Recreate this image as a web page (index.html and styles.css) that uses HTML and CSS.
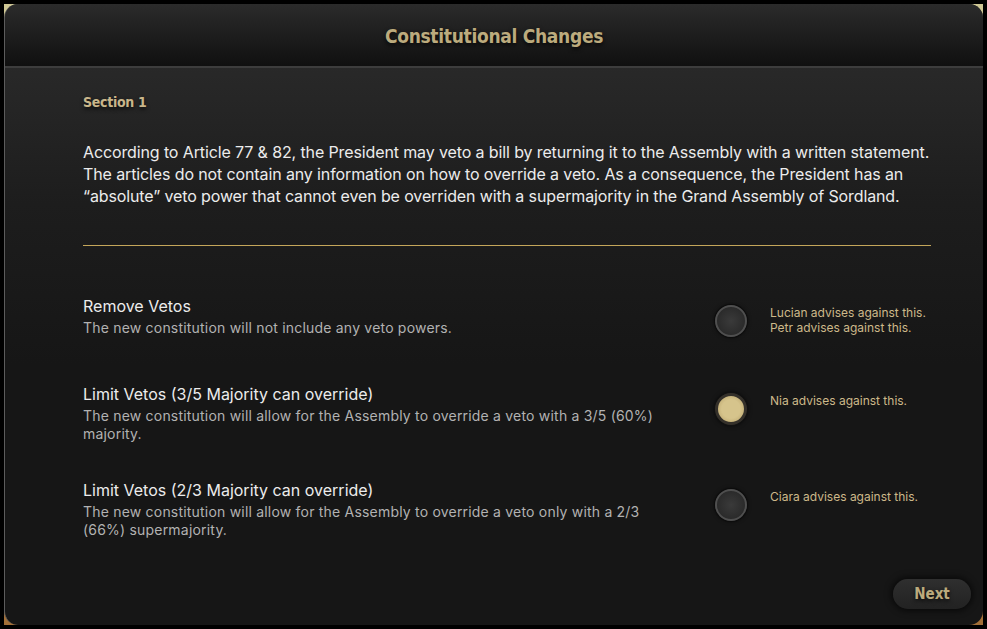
FILE: index.html
```html
<!DOCTYPE html>
<html lang="en">
<head>
    <meta charset="UTF-8">
    <meta name="viewport" content="width=device-width, initial-scale=1.0">
    <title>Constitutional Changes</title>
    <link rel="stylesheet" href="styles.css">
</head>
<body>

    <div class="frame">
        <div class="window">

            <!-- Title Bar -->
            <div class="title-bar">
                <h1>Constitutional Changes</h1>
            </div>

            <div class="content">
                <h2 class="section-label">Section 1</h2>
                <p class="summary">According to Article 77 &amp; 82, the President may veto a bill by returning it to the Assembly with a written statement. The articles do not contain any information on how to override a veto. As a consequence, the President has an “absolute” veto power that cannot even be overriden with a supermajority in the Grand Assembly of Sordland.</p>

                <div class="divider"></div>

                <!-- Options -->
                <div class="options">
                    <div class="option">
                        <div class="option-text">
                            <h3>Remove Vetos</h3>
                            <p>The new constitution will not include any veto powers.</p>
                        </div>
                        <div class="radio-cell"><span class="radio"></span></div>
                        <div class="advice">
                            <span>Lucian advises against this.</span>
                            <span>Petr advises against this.</span>
                        </div>
                    </div>

                    <div class="option">
                        <div class="option-text">
                            <h3>Limit Vetos (3/5 Majority can override)</h3>
                            <p>The new constitution will allow for the Assembly to override a veto with a 3/5 (60%) majority.</p>
                        </div>
                        <div class="radio-cell"><span class="radio selected"></span></div>
                        <div class="advice">
                            <span>Nia advises against this.</span>
                        </div>
                    </div>

                    <div class="option">
                        <div class="option-text">
                            <h3>Limit Vetos (2/3 Majority can override)</h3>
                            <p>The new constitution will allow for the Assembly to override a veto only with a 2/3 (66%) supermajority.</p>
                        </div>
                        <div class="radio-cell"><span class="radio"></span></div>
                        <div class="advice">
                            <span>Ciara advises against this.</span>
                        </div>
                    </div>
                </div>

                <div class="footer">
                    <button class="next-btn">Next</button>
                </div>
            </div>
        </div>
    </div>

</body>
</html>
```

FILE: styles.css
```css
/* General Styling */
html, body {
    margin: 0;
    height: 100%;
}

body {
    background-color: #000;
    font-family: Inter, "Noto Sans", sans-serif;
    padding: 4px;
    box-sizing: border-box;
}

.frame {
    height: 100%;
    background: linear-gradient(#cfc795, #d6c27a 30%, #b58f55 70%, #a36f37);
}

.window {
    height: 100%;
    display: flex;
    flex-direction: column;
    border-radius: 14px;
    overflow: hidden;
    background: linear-gradient(#2e2e2e 0px, #1d1d1d 200px, #161616 360px, #161616);
    border-left: 1px solid #5c5c5c;
    box-sizing: border-box;
}

/* Title Bar */
.title-bar {
    height: 62px;
    flex-shrink: 0;
    display: flex;
    align-items: center;
    justify-content: center;
    background: linear-gradient(#2b2b2b, #101010);
    border-bottom: 2px solid #3d3d3d;
}

.title-bar h1,
.section-label,
.next-btn {
    font-family: "DejaVu Sans", sans-serif;
    font-stretch: condensed;
    font-weight: bold;
    color: #bcab7d;
    text-shadow: 0 2px 4px rgba(0,0,0,0.8);
}

.title-bar h1 {
    margin: 2px 0 0;
    font-size: 19px;
    letter-spacing: -0.3px;
}

/* Content */
.content {
    flex: 1;
    display: flex;
    flex-direction: column;
    padding: 26px 52px 16px 78px;
}

.section-label {
    margin: 0;
    font-size: 14px;
    letter-spacing: -0.3px;
    color: #c9b68a;
}

.summary {
    margin: 31px 0 0;
    font-size: 16px;
    line-height: 22px;
    letter-spacing: -0.12px;
    color: #ececec;
}

.divider {
    margin-top: 38px;
    height: 1px;
    background-color: #c4a65a;
}

/* Options */
.options {
    display: flex;
    flex-direction: column;
    gap: 36px;
    margin-top: 49px;
}

.option {
    display: grid;
    grid-template-columns: 616px 64px 1fr;
    min-height: 52px;
}

.option-text {
    padding-right: 22px;
}

.option-text h3 {
    margin: 0 0 2px;
    font-size: 16px;
    font-weight: normal;
    line-height: 22px;
    color: #ececec;
}

.option-text p {
    margin: 0;
    font-size: 14px;
    line-height: 18px;
    letter-spacing: 0.2px;
    color: #b2b2b2;
}

.radio-cell {
    display: flex;
    justify-content: center;
    padding-top: 10px;
}

.radio {
    width: 28px;
    height: 28px;
    border-radius: 50%;
    border: 2px solid #4f4f4f;
    background: radial-gradient(#3a3a3a, #242424);
    box-shadow: 0 0 0 1px #0d0d0d, 0 0 4px rgba(0,0,0,0.8);
}

.radio.selected {
    border: 3px solid #34302a;
    width: 26px;
    height: 26px;
    background: radial-gradient(#d6c48c 50%, #b49e66);
    box-shadow: 0 0 0 1px #121212, 0 0 5px rgba(0,0,0,0.9);
}

.advice {
    display: flex;
    flex-direction: column;
    padding: 10px 0 0 7px;
    font-size: 12px;
    line-height: 15px;
    white-space: nowrap;
    color: #cdb98a;
}

/* Footer */
.footer {
    margin-top: auto;
    display: flex;
    justify-content: flex-end;
    margin-right: -40px;
}

.next-btn {
    width: 78px;
    height: 30px;
    border: none;
    border-radius: 15px;
    font-size: 15px;
    background: linear-gradient(#2f2f2f, #222);
    box-shadow: 0 0 6px 2px rgba(0,0,0,0.6);
    cursor: pointer;
}
```
